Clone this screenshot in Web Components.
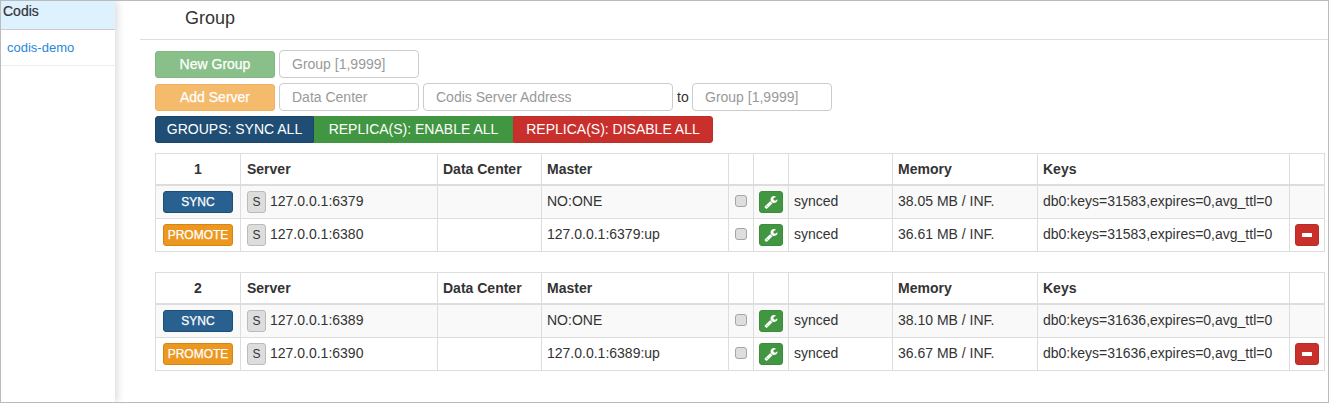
<!DOCTYPE html>
<html><head><meta charset="utf-8"><style>
html,body{margin:0;padding:0;background:#fff}
body{font:14px/20px "Liberation Sans",Arial,sans-serif;color:#333}
</style></head><body>
<codis-app>
  <codis-sidebar slot="side" title-text="Codis" item="codis-demo"></codis-sidebar>
  <codis-title>Group</codis-title>
  <codis-toolbar></codis-toolbar>
  <codis-group num="1" a="127.0.0.1:6379" b="127.0.0.1:6380" ma="38.05 MB / INF." mb="36.61 MB / INF." keys="31583"></codis-group>
  <codis-group num="2" a="127.0.0.1:6389" b="127.0.0.1:6390" ma="38.10 MB / INF." mb="36.67 MB / INF." keys="31636"></codis-group>
</codis-app>
<script>
function el(name, css, html){
  customElements.define(name, class extends HTMLElement{
    connectedCallback(){
      if(this.shadowRoot) return;
      const r=this.attachShadow({mode:'open'});
      r.innerHTML='<style>'+css+'</style>'+(typeof html==='function'?html(this):html);
    }
  });
}
el('codis-app',`
  :host{display:flex;box-sizing:border-box;width:1329px;height:403px;border:1px solid #bbb;overflow:hidden;background:#fff}
  .side{flex:none;width:114px}
  .main{flex:1;min-width:0;margin-left:25px}
`,`<div class="side"><slot name="side"></slot></div><div class="main"><slot></slot></div>`);

el('codis-sidebar',`
  :host{display:block;height:100%;box-shadow:3px 0 7px rgba(0,0,0,.13);background:#fff;position:relative}
  .h{height:28px;background:#def1ff;border-bottom:1px solid #ccc;padding:0 2px;font-size:14px;line-height:21px;color:#333;-webkit-text-stroke:.2px #333}
  .i{height:35px;border-bottom:1px solid #eee;padding:0 6px;line-height:36px;font-size:13px;color:#2a87d8}
`,h=>`<div class="h">${h.getAttribute('title-text')}</div><div class="i">${h.getAttribute('item')}</div>`);

el('codis-title',`
  :host{display:block;height:38px;border-bottom:1px solid #ddd;padding-left:45px;font-size:18px;line-height:35px;color:#333}
`,`<slot></slot>`);

el('codis-btn',`
  :host{display:inline-flex;align-items:center;justify-content:center;box-sizing:border-box;border-radius:3px;color:#fff;border:1px solid var(--bd,transparent);background:var(--bg);width:var(--w,auto);height:var(--h,27px);padding-bottom:var(--pb,0);font-size:var(--fs,14px);-webkit-text-stroke:var(--st,0);white-space:nowrap;flex:none}
`,`<slot></slot>`);

el('codis-input',`
  :host{display:block;flex:none;box-sizing:border-box;height:28px;width:var(--w,140px);border:1px solid #ccc;border-radius:4px;padding:0 12px;line-height:26px;color:#999;font-size:14px;background:#fff;white-space:nowrap}
`,`<slot></slot>`);

el('codis-toolbar',`
  :host{display:flex;flex-direction:column;padding:10px 0 0 15px;--pb:2px}
  .row{display:flex;align-items:flex-end;gap:4px;height:28px;margin-bottom:5px}
  .to{width:11px;height:27px;line-height:26px;color:#333}
  .grp{display:flex;margin:0 0 10px;height:27px;--pb:1px}
`,`
<div class="row"><codis-btn style="--bg:#89c08a;--bd:#7fb980;--w:120px;--st:.25px">New Group</codis-btn><codis-input>Group [1,9999]</codis-input></div>
<div class="row"><codis-btn style="--bg:#f4bb6c;--bd:#efb261;--w:120px;--st:.25px">Add Server</codis-btn><codis-input>Data Center</codis-input><codis-input style="--w:250px">Codis Server Address</codis-input><span class="to">to</span><codis-input>Group [1,9999]</codis-input></div>
<div class="grp"><codis-btn style="--bg:#204d74;--w:159px;border-radius:3px 0 0 3px;border-color:#1d4569">GROUPS: SYNC ALL</codis-btn><codis-btn style="--bg:#419641;--w:199px;border-radius:0;border-color:#419641">REPLICA(S): ENABLE ALL</codis-btn><codis-btn style="--bg:#c9302c;--w:200px;border-radius:0 3px 3px 0;border-color:#bd2d29">REPLICA(S): DISABLE ALL</codis-btn></div>
`);

const WRENCH='<svg width="14" height="14" viewBox="0 0 1792 1792" fill="#fff" style="display:block"><path d="M448 1472q0-26-19-45t-45-19-45 19-19 45 19 45 45 19 45-19 19-45zm644-420l-682 682q-37 37-90 37-52 0-91-37l-106-108q-38-36-38-90 0-53 38-91l681-681q39 98 114.5 173.5t173.5 114.5zm634-435q0 39-23 106-47 134-164.5 217.5t-258.5 83.5q-185 0-316.5-131.5t-131.5-316.5 131.5-316.5 316.5-131.5q58 0 121.5 16.5t107.5 46.5q16 11 16 28t-16 28l-293 169v224l193 107q5-3 79-48.5t135.5-81 70.5-35.5q15 0 23.5 10t8.5 25z"/></svg>';
const sm='--h:22px;--fs:12px;';
function row(cls,btn,addr,master,mem,keys,minus){
  return `<tr class="${cls}"><td class="c">${btn}</td>
  <td><div class="srv"><codis-btn style="${sm}--w:19px;--bg:#ddd;--bd:#bbb;color:#333">S</codis-btn><span>${addr}</span></div></td>
  <td></td><td>${master}</td>
  <td class="c"><input type="checkbox" tabindex="-1"></td>
  <td class="c"><codis-btn style="${sm}--w:24px;--bg:#419641;--bd:#3d8b3d;">${WRENCH}</codis-btn></td>
  <td>synced</td><td>${mem}</td><td>db0:keys=${keys},expires=0,avg_ttl=0</td>
  <td class="c">${minus?`<codis-btn style="${sm}--w:24px;--bg:#c9302c;--bd:#b92c28"><svg width="10" height="4" style="display:block"><rect width="10" height="4" rx=".5" fill="#fff"/></svg></codis-btn>`:''}</td></tr>`;
}
el('codis-group',`
  :host{display:block;margin:0 0 20px 15px;width:1170px}
  table{border-collapse:collapse;table-layout:fixed;width:1170px;font-size:14px;line-height:20px;color:#333}
  th,td{border:1px solid #ddd;padding:5px;text-align:left;white-space:nowrap;overflow:hidden}
  td{vertical-align:top}
  th{vertical-align:middle}
  thead th{border-bottom:2px solid #ddd;font-weight:bold}
  thead th.s{padding-left:6px}
  th.c,td.c{text-align:center;padding:5px 0}
  td.c codis-btn{vertical-align:top}
  tr.odd td{background:#f9f9f9}
  .srv{display:flex;align-items:flex-start;gap:4px;margin-left:1px}
  input{appearance:none;-webkit-appearance:none;box-sizing:border-box;width:12px;height:12px;margin:4px auto 0;border:1px solid #a5a5a5;border-radius:3px;background:#dedede;display:block}
`,h=>{const a=n=>h.getAttribute(n);
  const bst='--st:.25px;';
  return `<table><colgroup><col style="width:85px"><col style="width:197px"><col style="width:104px"><col style="width:187px"><col style="width:25px"><col style="width:35px"><col style="width:104px"><col style="width:145px"><col style="width:252px"><col style="width:35px"></colgroup>
  <thead><tr><th class="c">${a('num')}</th><th class="s">Server</th><th>Data Center</th><th>Master</th><th></th><th></th><th></th><th>Memory</th><th>Keys</th><th></th></tr></thead>
  <tbody>${row('odd',`<codis-btn style="${sm}${bst}--w:70px;--bg:#286090;--bd:#204d74">SYNC</codis-btn>`,a('a'),'NO:ONE',a('ma'),a('keys'),false)}
  ${row('',`<codis-btn style="${sm}${bst}--w:70px;--bg:#ec971f;--bd:#d58512">PROMOTE</codis-btn>`,a('b'),a('a')+':up',a('mb'),a('keys'),true)}</tbody></table>`;});
</script>
</body></html>
